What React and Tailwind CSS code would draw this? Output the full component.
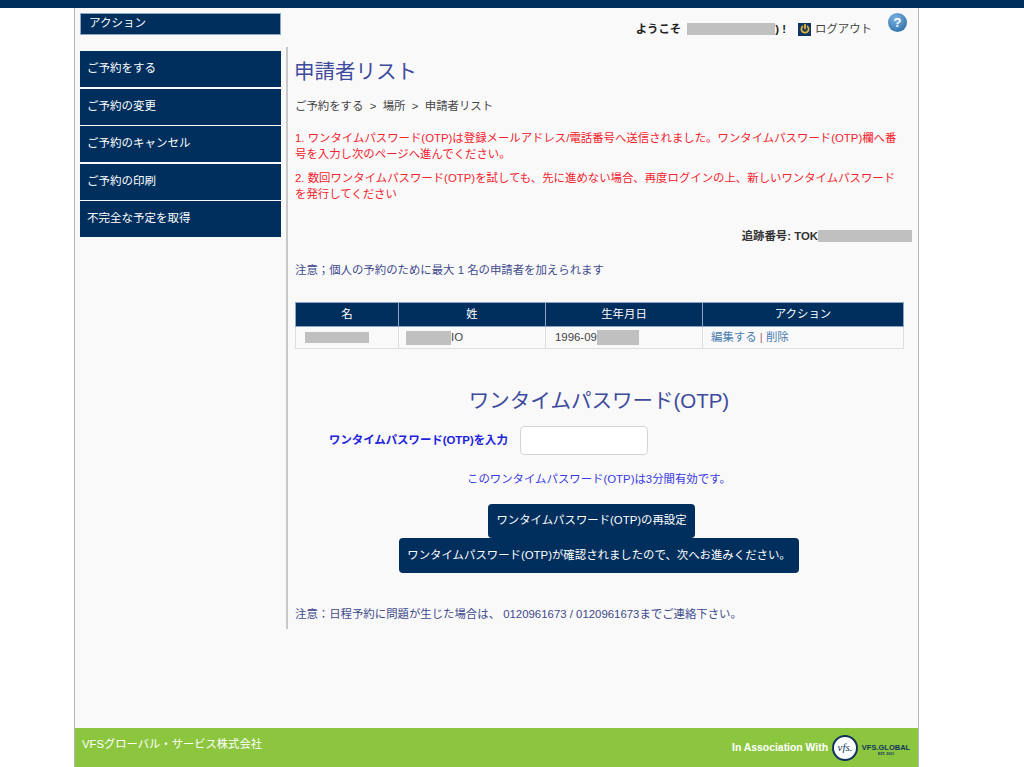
import React from 'react';

const font = { fontFamily: '"Liberation Sans", "Noto Sans CJK JP", sans-serif' };

const menuItems = [
  'ご予約をする',
  'ご予約の変更',
  'ご予約のキャンセル',
  'ご予約の印刷',
  '不完全な予定を取得',
];

const Redacted = ({ className }) => <span className={`inline-block bg-[#c0c0c0] ${className}`} />;

const PowerIcon = () => (
  <span className="flex h-[13px] w-[13px] items-center justify-center bg-[#0f3560]">
    <svg viewBox="0 0 12 12" className="h-[12px] w-[12px]" fill="none" stroke="#e2b33a" strokeWidth="1.8" strokeLinecap="round">
      <path d="M3.6 3.4a3.6 3.6 0 1 0 4.8 0" />
      <path d="M6 1.6v4" />
    </svg>
  </span>
);

const HelpIcon = () => (
  <span className="flex h-[19px] w-[19px] items-center justify-center rounded-full bg-[radial-gradient(circle_at_40%_30%,#7db4e0,#1d639f)] text-[13px] font-bold leading-none text-white">
    ?
  </span>
);

const VfsLogo = () => (
  <div className="flex items-center gap-[3px]">
    <span className="flex h-[26px] w-[26px] items-center justify-center rounded-full border-2 border-[#12335c] bg-white font-['Liberation_Serif'] text-[11px] italic leading-none text-[#12335c]">
      vfs.
    </span>
    <div className="flex w-[50px] flex-col items-center pt-[3px]">
      <span className="text-[7.5px] font-bold leading-[9px] text-[#12335c]">VFS.GLOBAL</span>
      <span className="text-[3.5px] font-bold leading-[4px] text-[#12335c]">EST. 2001</span>
    </div>
  </div>
);

const App = () => {
  return (
    <div style={font} className="flex h-[767px] w-[1024px] flex-col overflow-hidden bg-white text-[11.4px]">
      <div className="h-[8px] bg-[#002f5e]" />
      <div className="ml-[74px] flex h-[759px] w-[845px] flex-col border-x border-[#b5b5b5] bg-[#f9f9f9]">
        <div className="flex flex-1">
          <aside className="ml-[5px] w-[201px] shrink-0 pt-[5px]">
            <div className="flex h-[22px] items-center border border-[#8fa5c4] bg-[#002f5e] pl-[8px] text-[11.5px] text-white">
              アクション
            </div>
            <nav className="mt-[16px] flex flex-col gap-[1.5px]">
              {menuItems.map((item) => (
                <a key={item} className="flex h-[36px] items-center bg-[#002f5e] pl-[7px] text-[11.5px] text-white">
                  {item}
                </a>
              ))}
            </nav>
          </aside>

          <main className="ml-[5px] flex-1">
            <div className="flex h-[39px] items-start justify-end pr-[11px] pt-[5px]">
              <div className="mt-[8px] flex items-center leading-[16px]">
                <span className="font-bold text-[#222]">ようこそ</span>
                <Redacted className="ml-[6px] h-[12px] w-[88px]" />
                <span className="font-bold text-[#222]">) !</span>
                <span className="ml-[12px] mr-[4px]"><PowerIcon /></span>
                <span className="text-[#444]">ログアウト</span>
              </div>
              <div className="ml-[16px]"><HelpIcon /></div>
            </div>

            <div className="h-[582px] border-l-2 border-[#c9c9c9] pl-[7px] pr-[6px]">
              <h1 className="-ml-[1px] pt-[10px] text-[20.5px] font-normal leading-[30px] text-[#3e4a9e]">申請者リスト</h1>
              <p className="mt-[11px] leading-[16px] text-[#444]">
                ご予約をする&nbsp;&nbsp;&gt;&nbsp;&nbsp;場所&nbsp;&nbsp;&gt;&nbsp;&nbsp;申請者リスト
              </p>
              <div className="mt-[16px] pr-[8px] leading-[16px] text-[#f5222d]">
                <p>1. ワンタイムパスワード(OTP)は登録メールアドレス/電話番号へ送信されました。ワンタイムパスワード(OTP)欄へ番号を入力し次のページへ進んでください。</p>
                <p className="mt-[8px]">2. 数回ワンタイムパスワード(OTP)を試しても、先に進めない場合、再度ログインの上、新しいワンタイムパスワードを発行してください</p>
              </div>
              <div className="mt-[26px] flex items-center justify-end font-bold leading-[16px] text-[#333]">
                追跡番号: TOK
                <Redacted className="h-[12px] w-[94px]" />
              </div>
              <p className="mt-[18px] leading-[16px] text-[#3e4a8e]">注意；個人の予約のために最大 1 名の申請者を加えられます</p>

              <table className="mt-[24px] w-[609px] table-fixed border-collapse">
                <thead>
                  <tr className="h-[24px] bg-[#002f5e] text-white">
                    <th className="w-[103px] border border-[#8fa5c4] font-normal">名</th>
                    <th className="w-[147px] border border-[#8fa5c4] font-normal">姓</th>
                    <th className="w-[157px] border border-[#8fa5c4] font-normal">生年月日</th>
                    <th className="border border-[#8fa5c4] font-normal">アクション</th>
                  </tr>
                </thead>
                <tbody>
                  <tr className="h-[22px] text-[#444]">
                    <td className="border border-[#dedede] pl-[9px]"><Redacted className="h-[11px] w-[64px] align-middle" /></td>
                    <td className="border border-[#dedede] pl-[7px]"><Redacted className="h-[14px] w-[45px] align-middle" />IO</td>
                    <td className="border border-[#dedede] pl-[9px]">1996-09<Redacted className="h-[15px] w-[42px] align-middle" /></td>
                    <td className="border border-[#dedede] pl-[8px]">
                      <a className="text-[#4a7eb0]">編集する</a>
                      <span className="text-[#b0607a]"> | </span>
                      <a className="text-[#4a7eb0]">削除</a>
                    </td>
                  </tr>
                </tbody>
              </table>

              <h2 className="mt-[37px] pr-[9px] text-center text-[20.5px] font-normal leading-[30px] text-[#3e4a9e]">ワンタイムパスワード(OTP)</h2>
              <div className="mt-[10px] flex items-center">
                <label className="ml-[34px] mt-[1px] w-[191px] font-bold text-[#2222dd]">ワンタイムパスワード(OTP)を入力</label>
                <input className="h-[29px] w-[128px] rounded-[4px] border border-[#d5d5d5] bg-white" />
              </div>
              <p className="mt-[16px] ml-[172px] leading-[16px] text-[#3a3ae0]">このワンタイムパスワード(OTP)は3分間有効です。</p>
              <div className="mt-[17px] flex flex-col items-start">
                <button className="ml-[193px] h-[34px] w-[207px] rounded-[4px] bg-[#002f5e] text-white">ワンタイムパスワード(OTP)の再設定</button>
                <button className="ml-[104px] h-[35px] w-[400px] rounded-[4px] bg-[#002f5e] text-white">ワンタイムパスワード(OTP)が確認されましたので、次へお進みください。</button>
              </div>
              <p className="mt-[33px] leading-[16px] text-[#3e4a8e]">注意：日程予約に問題が生じた場合は、 0120961673 / 0120961673までご連絡下さい。</p>
            </div>
          </main>
        </div>

        <footer className="flex h-[39px] items-center justify-between bg-[#8cc63f] pl-[7px] pr-[7px] text-white">
          <span className="-mt-[6px] text-[11.3px]">VFSグローバル・サービス株式会社</span>
          <div className="flex items-center gap-[4px]">
            <span className="text-[10.4px] font-bold">In Association With</span>
            <VfsLogo />
          </div>
        </footer>
      </div>
    </div>
  );
};

export default App;
